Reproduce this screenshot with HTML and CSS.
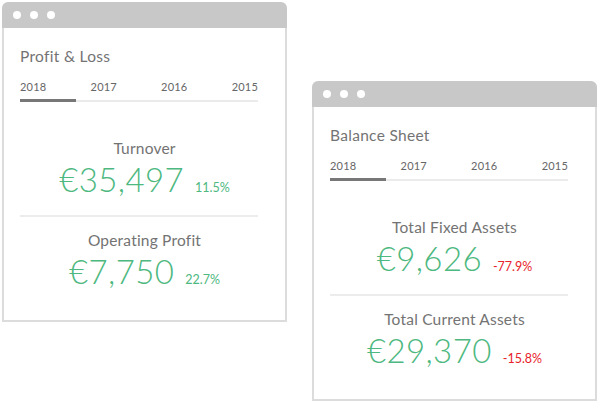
FILE: index.html
```html
<!DOCTYPE html>
<html lang="en">
<head>
<meta charset="utf-8">
<title>Financials</title>
<link rel="stylesheet" href="styles.css">
</head>
<body>
<div class="stage">
  <section class="window">
    <div class="titlebar"><span class="dot"></span><span class="dot"></span><span class="dot"></span></div>
    <div class="body">
      <h2 class="title">Profit &amp; Loss</h2>
      <div class="tabs">
        <div class="years"><span>2018</span><span>2017</span><span>2016</span><span>2015</span></div>
        <div class="track"><div class="indicator"></div></div>
      </div>
      <div class="metric">
        <div class="label">Turnover</div>
        <div class="value"><span class="amount">€35,497</span><span class="change up">11.5%</span></div>
      </div>
      <div class="divider"></div>
      <div class="metric second">
        <div class="label">Operating Profit</div>
        <div class="value"><span class="amount">€7,750</span><span class="change up">22.7%</span></div>
      </div>
    </div>
  </section>
  <section class="window offset">
    <div class="titlebar"><span class="dot"></span><span class="dot"></span><span class="dot"></span></div>
    <div class="body">
      <h2 class="title">Balance Sheet</h2>
      <div class="tabs">
        <div class="years"><span>2018</span><span>2017</span><span>2016</span><span>2015</span></div>
        <div class="track"><div class="indicator"></div></div>
      </div>
      <div class="metric">
        <div class="label">Total Fixed Assets</div>
        <div class="value"><span class="amount">€9,626</span><span class="change down">-77.9%</span></div>
      </div>
      <div class="divider"></div>
      <div class="metric second">
        <div class="label">Total Current Assets</div>
        <div class="value"><span class="amount">€29,370</span><span class="change down">-15.8%</span></div>
      </div>
    </div>
  </section>
</div>
</body>
</html>
```
FILE: styles.css
```css
* { box-sizing: border-box; }
html, body { margin: 0; padding: 0; background: #fff; }
body { font-family: Lato, "Open Sans", sans-serif; }
.stage {
  display: flex;
  align-items: flex-start;
  gap: 25px;
  padding: 2px 0 0 2px;
}
.window {
  width: 285px;
  height: 320px;
  display: flex;
  flex-direction: column;
}
.window.offset { margin-top: 79px; }
.titlebar {
  height: 26px;
  background: #c8c8c8;
  border-radius: 6px 6px 0 0;
  display: flex;
  align-items: center;
  gap: 9px;
  padding-left: 11px;
}
.dot {
  width: 8px;
  height: 8px;
  border-radius: 50%;
  background: #fff;
}
.body {
  flex: 1;
  border: 2px solid #dcdcdc;
  border-top: 0;
  padding: 18px 0 0 16px;
}
.title {
  margin: 0;
  font-size: 15.5px;
  line-height: 20px;
  font-weight: 400;
  letter-spacing: 0.3px;
  color: #737373;
}
.tabs { width: 238px; margin-top: 14px; }
.years {
  display: flex;
  justify-content: space-between;
  font-size: 11px;
  line-height: 14px;
  color: #666;
  letter-spacing: 0.2px;
}
.track {
  position: relative;
  margin-top: 6px;
  height: 2px;
  background: #ebebeb;
}
.indicator {
  position: absolute;
  left: 0;
  top: -1px;
  width: 56px;
  height: 3px;
  background: #777;
}
.metric {
  margin-left: -16px;
  text-align: center;
  margin-top: 36px;
}
.metric.second { margin-top: 13px; }
.label {
  font-size: 15.5px;
  line-height: 20px;
  letter-spacing: 0.2px;
  color: #737373;
}
.value {
  margin-top: 1px;
  height: 40px;
  display: flex;
  justify-content: center;
  align-items: baseline;
  gap: 11px;
}
.amount {
  font-size: 33px;
  line-height: 40px;
  font-weight: 300;
  letter-spacing: 0.4px;
  color: #4db880;
}
.change { font-size: 12.5px; line-height: 14px; }
.change.up { color: #4db880; }
.change.down { color: #e8222a; }
.divider {
  width: 238px;
  height: 2px;
  background: #ececec;
  margin-top: 16px;
}
```
